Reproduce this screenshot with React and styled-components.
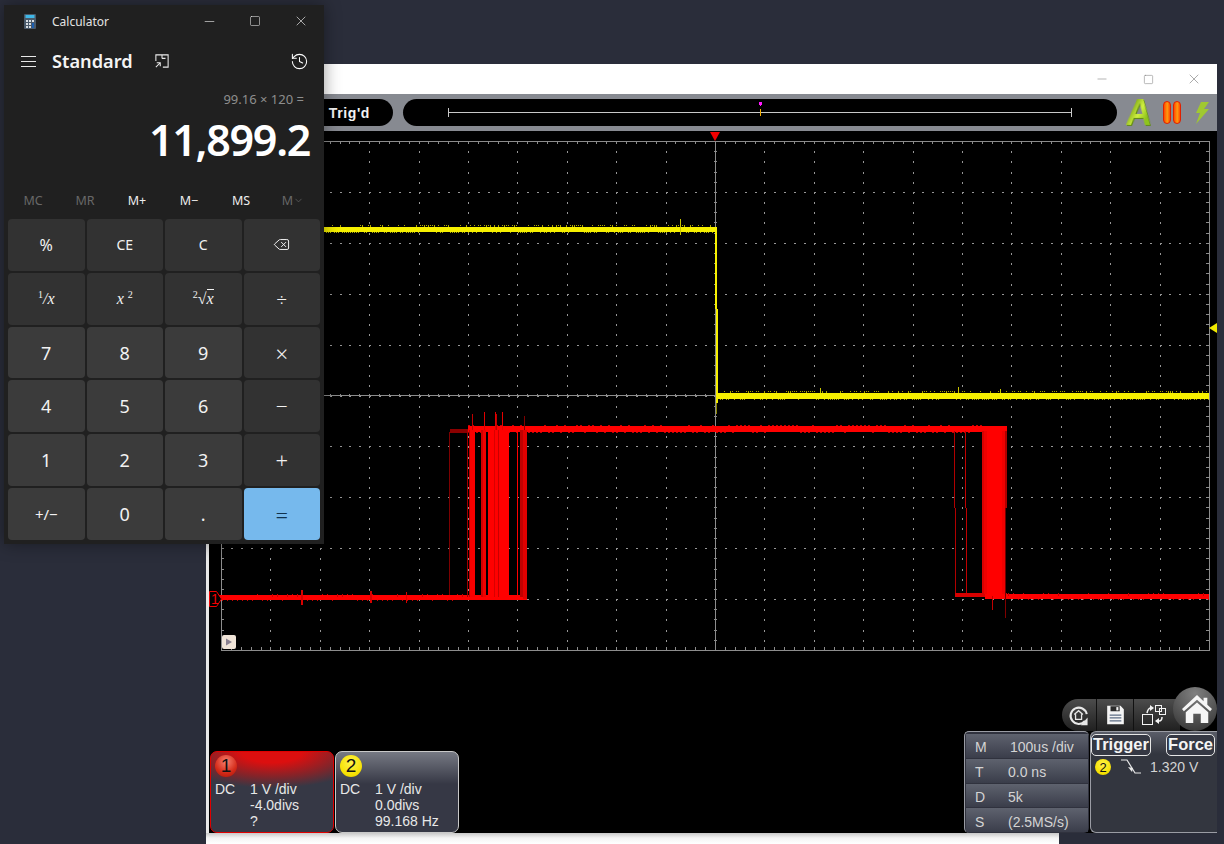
import React from "react";
import styled, { createGlobalStyle } from "styled-components";
import { ChevronDown, Delete, History, Minus, Square, X } from "lucide-react";

const GlobalStyle = createGlobalStyle`
  html, body {
    margin: 0;
    height: 100%;
    overflow: hidden;
    background: #2a2d3a;
  }
  * {
    box-sizing: border-box;
  }
`;

const Desktop = styled.div`
  position: relative;
  width: 1224px;
  height: 844px;
  overflow: hidden;
  background: #2a2d3a;
`;

/* ---------- oscilloscope window ---------- */

const ScopeWindow = styled.section`
  position: absolute;
  left: 206px;
  top: 64px;
  width: 1011px;
  height: 780px;
  display: flex;
  flex-direction: column;
  font-family: "Liberation Sans", Arial, sans-serif;
`;

const ScopeTitleBar = styled.div`
  height: 30px;
  flex: none;
  display: flex;
  justify-content: flex-end;
  align-items: center;
  background: #fff;
`;

const ScopeCtl = styled.span`
  width: 46px;
  display: flex;
  justify-content: center;
  color: #808080;
`;

const Toolbar = styled.div`
  height: 37px;
  flex: none;
  display: flex;
  align-items: center;
  padding: 0 0 0 94px;
  background: #878a91;
`;

const TrigPill = styled.div`
  width: 93px;
  height: 27px;
  display: flex;
  align-items: center;
  justify-content: flex-end;
  padding-right: 23px;
  background: #000;
  border-radius: 0 14px 14px 0;
  color: #f2f2f2;
  font-size: 14px;
  font-weight: 700;
  letter-spacing: 0.6px;
`;

const TimePill = styled.div`
  position: relative;
  width: 714px;
  height: 27px;
  margin-left: 10px;
  background: #000;
  border-radius: 14px;
`;

const TimeLine = styled.span`
  position: absolute;
  left: 45px;
  right: 45px;
  top: 9px;
  height: 9px;
  border-left: 1px solid #c8c8c8;
  border-right: 1px solid #c8c8c8;
  background: linear-gradient(#c8c8c8, #c8c8c8) 0 4px / 100% 1px no-repeat;
`;

const TimeMark = styled.span`
  position: absolute;
  left: 357px;
  top: 3px;
  width: 1px;
  height: 14px;
  background: linear-gradient(#ff19ff 0 4px, transparent 4px 7px, #f6b000 7px);

  &::before {
    content: "";
    position: absolute;
    left: -1px;
    top: 0;
    width: 3px;
    height: 3px;
    background: #ff19ff;
  }
`;

const AutoMark = styled.span`
  width: 26px;
  margin-left: 9px;
  font-size: 36px;
  font-weight: 700;
  line-height: 30px;
  text-align: center;
  background: linear-gradient(115deg, #6f9a10 15%, #d0f040 50%, #8fc41c 75%);
  -webkit-background-clip: text;
  background-clip: text;
  color: transparent;
  transform: skewX(-5deg);
  filter: drop-shadow(1px 1px 0 #5f8a10);
`;

const PauseMark = styled.span`
  display: flex;
  gap: 2px;
  margin-left: 11px;
`;

const PauseBar = styled.span`
  width: 8px;
  height: 23px;
  border-radius: 4px;
  border: 1px solid #e02000;
  background: linear-gradient(90deg, #ff4a00, #ff9a10 55%, #ff4a00);
`;

const BoltMark = styled.svg`
  margin-left: 14px;
  width: 14px;
  height: 22px;
`;

const Screen = styled.div`
  flex: none;
  height: 702px;
  display: flex;
  flex-direction: column;
  justify-content: space-between;
  background: #000;
  border-left: 3px solid #e8e8e8;
`;

const Plot = styled.svg`
  display: block;
  width: 1008px;
  height: 530px;
`;

const Dock = styled.div`
  display: flex;
  justify-content: space-between;
  align-items: flex-end;
  padding-left: 1px;
`;

const Cards = styled.div`
  display: flex;
  gap: 1px;
`;

const Card = styled.div`
  width: 124px;
  height: 82px;
  padding: 3px 4px 0;
  border-radius: 7px;
  border: 1px solid ${(p) => (p.$active ? "#e00000" : "#c8c8c8")};
  background: ${(p) =>
    p.$active
      ? "radial-gradient(ellipse 100px 36px at 50% 0, #dc0f0f 30%, rgba(190,20,20,0.55) 70%, rgba(54,56,69,0) 100%), #363845"
      : "linear-gradient(#767983, #363845 32px)"};
  color: #e8e8e8;
  font-size: 14px;
`;

const Badge = styled.span`
  display: flex;
  align-items: center;
  justify-content: center;
  width: ${(p) => p.$size}px;
  height: ${(p) => p.$size}px;
  flex: none;
  border-radius: 50%;
  color: #111;
  font-size: ${(p) => p.$size - 3}px;
  background: ${(p) =>
    p.$red
      ? "radial-gradient(circle at 50% 30%, #f88070, #d42a18 60%, #a81408)"
      : "radial-gradient(circle at 50% 35%, #fff34a, #f5e000 70%, #c8b400)"};
`;

const CardBody = styled.div`
  display: grid;
  grid-template-columns: 35px 1fr;
  margin-top: 4px;
  line-height: 16px;
`;

const CardValues = styled.div`
  display: flex;
  flex-direction: column;
`;

const Controls = styled.div`
  display: flex;
  flex-direction: column;
  align-items: flex-end;
`;

const ToolRow = styled.div`
  display: flex;
  align-items: flex-end;
`;

const ToolPill = styled.div`
  display: flex;
  height: 32px;
  padding-right: 7px;
  margin-right: -7px;
  border-radius: 16px 0 0 16px;
  background: linear-gradient(#4c4c4c, #202020);
`;

const ToolSeg = styled.span`
  width: ${(p) => p.$w}px;
  display: flex;
  align-items: center;
  justify-content: center;
  border-right: ${(p) => (p.$last ? "none" : "1px solid #111")};
`;

const HomeButton = styled.span`
  position: relative;
  width: 44px;
  height: 44px;
  padding-left: 3px;
  display: flex;
  align-items: center;
  justify-content: center;
  border-radius: 50%;
  background: radial-gradient(circle at 50% 15%, #808080, #484848 70%, #2e2e2e);
`;

const PanelRow = styled.div`
  display: flex;
  gap: 1px;
  height: 102px;
`;

const MeasurePanel = styled.div`
  width: 125px;
  display: flex;
  flex-direction: column;
  gap: 1px;
  padding: 2px 1px 1px 1px;
  border-radius: 5px;
  background: #30323e;
  border: 1px solid #9a9ca4;
  border-width: 1px 0 0 1px;
`;

const MeasureRow = styled.div`
  flex: 1;
  display: grid;
  grid-template-columns: ${(p) => (p.$wide ? "35px" : "33px")} 1fr;
  align-items: center;
  padding: 3px 0 0 9px;
  background: linear-gradient(#5e626e, #3a3d4a);
  color: #d4d4d4;
  font-size: 14px;
`;

const TriggerPanel = styled.div`
  width: 127px;
  padding: 2px 2px 0 0;
  border-radius: 6px 0 0 6px;
  border: 1px solid #9a9ca4;
  border-width: 1px 0 1px 1px;
  background: linear-gradient(#5a5d68, #33363f 22px);
  color: #d4d4d4;
  font-size: 14px;
`;

const TriggerHead = styled.div`
  display: flex;
  justify-content: space-between;
`;

const TriggerButton = styled.span`
  padding: 0 1px;
  height: 22px;
  line-height: 19px;
  border: 1.5px solid #e6e6e6;
  border-radius: 5px;
  font-size: 16.5px;
  font-weight: 700;
  color: #f4f4f4;
  background: #353843;
`;

const TriggerLevel = styled.div`
  display: flex;
  align-items: center;
  margin: 3px 0 0 4px;
`;

const SlopeIcon = styled.svg`
  width: 22px;
  height: 16px;
  margin: 0 8px 0 9px;
`;

const FootStrip = styled.div`
  flex: 1;
  width: 853px;
  background: linear-gradient(#c8c8c8, #f4f4f4 5px, #fff);
`;

/* ---------- calculator window ---------- */

const CalcWindow = styled.section`
  position: absolute;
  left: 4px;
  top: 5px;
  width: 320px;
  height: 539px;
  padding: 0 4px;
  display: flex;
  flex-direction: column;
  background: #202020;
  box-shadow: 0 0 16px rgba(0, 0, 0, 0.4);
  color: #fff;
  font-family: "Noto Sans", "Open Sans", sans-serif;
`;

const CalcTitleBar = styled.div`
  height: 32px;
  flex: none;
  display: flex;
  align-items: center;
  margin-right: -4px;
  padding-left: 16px;
  font-size: 12px;
  color: #e4e4e4;
`;

const CalcTitle = styled.span`
  margin-left: 16px;
  flex: 1;
`;

const CalcCtl = styled.span`
  width: 46px;
  display: flex;
  justify-content: center;
  color: #eee;
`;

const CalcHeader = styled.div`
  height: 48px;
  flex: none;
  display: flex;
  align-items: center;
  padding: 0 11px 0 13px;
`;

const ModeName = styled.h1`
  margin: 0 22px 0 16px;
  font-size: 18.2px;
  font-weight: 600;
  color: #f4f4f4;
`;

const Spread = styled.span`
  flex: 1;
`;

const Expression = styled.div`
  height: 20px;
  margin-top: 4px;
  padding-right: 16px;
  text-align: right;
  font-size: 13px;
  line-height: 20px;
  color: #8e8e8e;
`;

const Display = styled.div`
  height: 60px;
  margin-top: 1px;
  padding-right: 10px;
  text-align: right;
  font-size: 43px;
  font-weight: 600;
  letter-spacing: -1.3px;
  line-height: 60px;
`;

const MemoryRow = styled.div`
  height: 30px;
  margin: 15px 0 0 -1px;
  display: grid;
  grid-template-columns: repeat(6, 52px);
`;

const MemoryKey = styled.span`
  display: flex;
  align-items: center;
  justify-content: center;
  font-size: 12.5px;
  color: ${(p) => (p.$off ? "#686868" : "#ededed")};
`;

const Keypad = styled.div`
  height: 321px;
  margin-top: 4px;
  display: grid;
  grid-template-columns: repeat(4, 1fr);
  grid-template-rows: repeat(6, 1fr);
  gap: 2px;
`;

const toneColor = { fn: "#323232", num: "#3b3b3b", eq: "#76b9ed" };

const Key = styled.div`
  display: flex;
  align-items: center;
  justify-content: center;
  border-radius: 4px;
  background: ${(p) => toneColor[p.$tone]};
  color: ${(p) => (p.$tone === "eq" ? "#10314d" : "#f2f2f2")};
  font-size: ${(p) => p.$size || 18}px;
  font-weight: ${(p) => (p.$light ? 300 : 400)};
`;

const MathText = styled.span`
  font-family: "Liberation Serif", "Times New Roman", serif;
  font-style: italic;
  font-size: 16px;

  sup {
    font-style: normal;
    font-size: 10px;
    line-height: 0;
  }
`;

const Radicand = styled.span`
  border-top: 1px solid #f2f2f2;
`;

/* ---------- plot data, in page coordinates ---------- */

const left = 221;
const right = 1209;
const top = 141;
const bottom = 650;
const divX = (right - left) / 20;
const divY = (bottom - top) / 10;
const midX = 715;
const midY = 395;

const grid = (() => {
  let dots = "";
  for (let i = 1; i < 20; i++) {
    const x = Math.round(left + i * divX);
    for (let j = 1; j < 50; j++) {
      dots += `M${x} ${Math.round(top + (j * divY) / 5)}h1v2h-1z`;
    }
  }
  for (let i = 1; i < 10; i++) {
    const y = Math.round(top + i * divY);
    for (let j = 1; j < 100; j++) {
      dots += `M${Math.round(left + (j * divX) / 5)} ${y}h2v1h-2z`;
    }
  }
  return dots;
})();

const ticks = (() => {
  let t = "";
  for (let j = 1; j < 100; j++) {
    const x = Math.round(left + (j * divX) / 5);
    t += `M${x} ${top}v3M${x} ${bottom}v-3M${x} ${midY - 1}v3`;
  }
  for (let j = 1; j < 50; j++) {
    const y = Math.round(top + (j * divY) / 5);
    t += `M${left} ${y}h3M${right} ${y}h-3M${midX - 1} ${y}h3`;
  }
  return t;
})();

// small repeatable noise along a trace
const noise = (from, to, step, seed) => {
  const out = [];
  for (let x = from; x < to; x += step) {
    const r = Math.abs(Math.sin(x * 12.9898 + seed) * 43758.5453) % 1;
    out.push({ x, r });
  }
  return out;
};

const yellowSpikes = noise(326, 714, 2, 1);
const yellowLowSpikes = noise(720, 1209, 2, 2);
const redLowSpikes = noise(222, 470, 5, 3);
const redHighSpikes = noise(468, 982, 4, 4);
const redTailSpikes = noise(1008, 1209, 5, 5);

const burstA = [
  [449, 1, 432, 595, "#7d0000"],
  [467, 1, 430, 597, "#a00000"],
  [469, 1, 430, 597, "#c00000"],
  [470, 5, 430, 597, "#f80000"],
  [481, 2, 430, 597, "#d00000"],
  [483, 3, 430, 597, "#f00000"],
  [488, 21, 430, 597, "#ff0000"],
  [494, 1, 430, 597, "#d80000"],
  [498, 1, 430, 597, "#c80000"],
  [517, 1, 430, 597, "#ff0000"],
  [520, 3, 430, 597, "#c00000"],
  [523, 4, 430, 599, "#e00000"],
  [472, 1, 414, 430, "#c00000"],
  [484, 1, 412, 430, "#e00000"],
  [495, 1, 412, 430, "#e00000"],
  [496, 1, 414, 430, "#c00000"],
  [502, 1, 412, 430, "#e80000"],
  [524, 1, 416, 430, "#800000"],
];

const burstB = [
  [954, 1, 431, 508, "#b00000"],
  [955, 1, 508, 593, "#b00000"],
  [965, 1, 431, 508, "#c00000"],
  [966, 1, 508, 593, "#c00000"],
  [982, 2, 431, 594, "#d80000"],
  [984, 3, 431, 594, "#f00000"],
  [987, 15, 431, 596, "#ff0000"],
  [1002, 3, 431, 594, "#f00000"],
  [1005, 2, 431, 508, "#b00000"],
  [1005, 1, 508, 598, "#700000"],
  [992, 1, 596, 610, "#c00000"],
  [1005, 1, 596, 618, "#800000"],
];

const Waveforms = () => (
  <g shapeRendering="crispEdges">
    {/* yellow channel */}
    <rect x="209" y="227" width="507" height="5" fill="#f6f000" />
    {yellowSpikes.map((s) => (
      <rect
        key={s.x}
        x={s.x}
        y={s.r > 0.5 ? 225 : 232}
        width="1"
        height={s.r > 0.8 ? 2 : 1}
        fill="#b0ac00"
      />
    ))}
    <rect x="680" y="219" width="1" height="16" fill="#c8c400" />
    <rect x="715" y="227" width="2" height="82" fill="#f6f000" />
    <rect x="716" y="309" width="2" height="94" fill="#f6f000" />
    <rect x="716" y="403" width="1" height="11" fill="#8a8600" />
    <rect x="718" y="393" width="491" height="6" fill="#f6f000" />
    {yellowLowSpikes.map((s) => (
      <rect key={s.x} x={s.x} y={s.r > 0.5 ? 391 : 399} width="1" height={s.r > 0.85 ? 2 : 1} fill="#a8a400" />
    ))}
    <rect x="820" y="388" width="1" height="5" fill="#c8c400" />
    <rect x="958" y="387" width="1" height="6" fill="#c8c400" />
    <rect x="1000" y="389" width="1" height="4" fill="#c8c400" />

    {/* red channel */}
    <rect x="450" y="429" width="20" height="4" fill="#8b0000" />
    <rect x="468" y="426" width="539" height="6" fill="#ff0000" />
    {redHighSpikes.map((s) => (
      <rect key={s.x} x={s.x} y={s.r > 0.5 ? 425 : 432} width="2" height="1" fill="#c00000" />
    ))}
    <rect x="209" y="595" width="318" height="5" fill="#ff0000" />
    <rect x="955" y="593" width="52" height="4" fill="#d80000" />
    <rect x="985" y="594" width="224" height="5" fill="#ff0000" />
    {redLowSpikes.map((s) => (
      <rect key={s.x} x={s.x} y={s.r > 0.5 ? 594 : 600} width="1" height={s.r > 0.8 ? 3 : 1} fill="#c80000" />
    ))}
    <rect x="301" y="590" width="2" height="15" fill="#d80000" />
    <rect x="370" y="591" width="2" height="12" fill="#d80000" />
    <rect x="406" y="592" width="1" height="11" fill="#d80000" />
    {redTailSpikes.map((s) => (
      <rect key={s.x} x={s.x} y={s.r > 0.5 ? 593 : 599} width="1" height={s.r > 0.85 ? 3 : 1} fill="#c00000" />
    ))}
    {[...burstA, ...burstB].map(([x, w, y1, y2, c]) => (
      <rect key={`${x}-${y1}-${c}`} x={x} y={y1} width={w} height={y2 - y1} fill={c} />
    ))}
  </g>
);

const ScopePlot = () => (
  <Plot viewBox="209 131 1008 530">
    <path d={grid} fill="#969696" shapeRendering="crispEdges" />
    <g stroke="#8c8c8c" fill="none" shapeRendering="crispEdges">
      <rect x={left} y={top} width={right - left} height={bottom - top} />
      <path d={`M${left} ${midY}H${right}M${midX} ${top}V${bottom}`} />
      <path d={ticks} />
    </g>
    <Waveforms />
    <path d="M710 132h10l-5 9z" fill="#f00000" />
    <path d="M1217 323v10l-8 -5z" fill="#f0e800" />
    <path d="M209.500 591.500h7l5 7.500l-5 7.500h-7z" fill="#000" stroke="#f00000" />
    <text x="211" y="604" fill="#f00000" fontSize="14" fontFamily="Liberation Sans">1</text>
    <rect x="222" y="635" width="14" height="14" rx="2" fill="#f0e4d8" />
    <path d="M226 638.500l6 3.500l-6 3.500z" fill="#8a8090" />
  </Plot>
);

const ReplayIcon = () => (
  <svg width="24" height="24" viewBox="0 0 28 28" fill="none">
    <path d="M21 21a9.500 9.500 0 1 1 2-8" stroke="#e8e8e8" strokeWidth="2.400" />
    <path d="M24 17v9h-8z" fill="#e8e8e8" />
    <path d="M8.500 13.500l5-4.500l5 4.500M10 13v6h7v-6" stroke="#e8e8e8" strokeWidth="1.500" />
  </svg>
);

const SaveIcon = () => (
  <svg width="19" height="20" viewBox="0 0 22 24">
    <path d="M1 1h16l4 4v18H1z" fill="#f4f4f4" />
    <rect x="5" y="1.500" width="11" height="6" fill="#2a2a2a" />
    <rect x="12" y="2.500" width="2.500" height="4" fill="#f4f4f4" />
    <path d="M4 12h14M4 15.500h14M4 19h14" stroke="#5c6c84" strokeWidth="1.500" />
  </svg>
);

const SwapIcon = () => (
  <svg width="24" height="20" viewBox="0 0 24 20" fill="none">
    <rect x="0.500" y="9.500" width="10" height="10" stroke="#f4f4f4" />
    <rect x="13.500" y="0.500" width="6" height="6" stroke="#f4f4f4" />
    <rect x="17.500" y="3.500" width="6" height="6" stroke="#f4f4f4" />
    <path d="M5 8q1-5 4-5" stroke="#f4f4f4" strokeWidth="1.500" />
    <path d="M8 0l4 3l-4 3z" fill="#f4f4f4" />
    <path d="M20 12q0 4-3 4" stroke="#f4f4f4" strokeWidth="1.500" />
    <path d="M17 13l-4 3l4 3z" fill="#f4f4f4" />
  </svg>
);

const HouseIcon = () => (
  <svg width="32" height="30" viewBox="0 0 34 32">
    <path d="M17 1L1 16l2 2.500L17 6l14 12.500 2-2.500-5-4.600V4h-4v3.700z" fill="#f6f6f6" />
    <path d="M5 19.500L17 9l12 10.500V31h-8V21h-8v10H5z" fill="#f6f6f6" />
  </svg>
);

const CalcGlyph = () => (
  <svg width="12" height="15" viewBox="0 0 12 15">
    <rect width="12" height="15" rx="1" fill="#4a5a6a" />
    <rect x="1.500" y="1" width="9" height="3" fill="#3fb8e8" />
    <path d="M2 6h2v2H2zM5 6h2v2H5zM2 9h2v2H2zM5 9h2v2H5zM2 12h2v2H2zM5 12h2v2H5z" fill="#d8dde2" />
    <rect x="8" y="9" width="2" height="5" fill="#1d5fb0" />
    <rect x="8" y="6" width="2" height="2" fill="#d8dde2" />
  </svg>
);

const MenuGlyph = () => (
  <svg width="15" height="11" viewBox="0 0 15 11" stroke="#e8e8e8" strokeWidth="1.100">
    <path d="M0 0.500h15M0 5.500h15M0 10.500h15" />
  </svg>
);

const CompactGlyph = () => (
  <svg width="14" height="14" viewBox="0 0 16 16" fill="none" stroke="#ececec" strokeWidth="1.200">
    <path d="M1 8V1h7v4M8 1h7v14H9M8 5h4" />
    <path d="M1 15l5-5M2 10h4v4" />
  </svg>
);

const keys = [
  { tone: "fn", label: "%", size: 16 },
  { tone: "fn", label: "CE", size: 14 },
  { tone: "fn", label: "C", size: 14 },
  { tone: "fn", label: <Delete size={17} strokeWidth={1.4} /> },
  { tone: "fn", label: <MathText><sup>1</sup>/x</MathText> },
  { tone: "fn", label: <MathText>x <sup>2</sup></MathText> },
  { tone: "fn", label: <MathText><sup>2</sup>√<Radicand>x</Radicand></MathText> },
  { tone: "fn", label: "÷", size: 19, light: true },
  { tone: "num", label: "7" },
  { tone: "num", label: "8" },
  { tone: "num", label: "9" },
  { tone: "fn", label: "×", size: 22, light: true },
  { tone: "num", label: "4" },
  { tone: "num", label: "5" },
  { tone: "num", label: "6" },
  { tone: "fn", label: "−", size: 21, light: true },
  { tone: "num", label: "1" },
  { tone: "num", label: "2" },
  { tone: "num", label: "3" },
  { tone: "fn", label: "+", size: 22, light: true },
  { tone: "num", label: "+/−", size: 15 },
  { tone: "num", label: "0" },
  { tone: "num", label: "." },
  { tone: "eq", label: "=", size: 22, light: true },
];

const memory = [
  { label: "MC", off: true },
  { label: "MR", off: true },
  { label: "M+" },
  { label: "M−" },
  { label: "MS" },
  { label: <>M<ChevronDown size={11} strokeWidth={1.5} /></>, off: true },
];

const Calculator = () => (
  <CalcWindow>
    <CalcTitleBar>
      <CalcGlyph />
      <CalcTitle>Calculator</CalcTitle>
      <CalcCtl><Minus size={15} strokeWidth={1} /></CalcCtl>
      <CalcCtl><Square size={12} strokeWidth={1.1} /></CalcCtl>
      <CalcCtl><X size={16} strokeWidth={1} /></CalcCtl>
    </CalcTitleBar>
    <CalcHeader>
      <MenuGlyph />
      <ModeName>Standard</ModeName>
      <CompactGlyph />
      <Spread />
      <History size={19} strokeWidth={1.3} />
    </CalcHeader>
    <Expression>99.16 × 120 =</Expression>
    <Display>11,899.2</Display>
    <MemoryRow>
      {memory.map((m, i) => (
        <MemoryKey key={i} $off={m.off}>{m.label}</MemoryKey>
      ))}
    </MemoryRow>
    <Keypad>
      {keys.map((k, i) => (
        <Key key={i} $tone={k.tone} $size={k.size} $light={k.light}>{k.label}</Key>
      ))}
    </Keypad>
  </CalcWindow>
);

const Scope = () => (
  <ScopeWindow>
    <ScopeTitleBar>
      <ScopeCtl><Minus size={14} strokeWidth={1} /></ScopeCtl>
      <ScopeCtl><Square size={11} strokeWidth={1.2} /></ScopeCtl>
      <ScopeCtl><X size={16} strokeWidth={1} /></ScopeCtl>
    </ScopeTitleBar>
    <Toolbar>
      <TrigPill>Trig'd</TrigPill>
      <TimePill>
        <TimeLine />
        <TimeMark />
      </TimePill>
      <AutoMark>A</AutoMark>
      <PauseMark>
        <PauseBar />
        <PauseBar />
      </PauseMark>
      <BoltMark viewBox="0 0 14 22">
        <path d="M6 0h8L9 7h5L1 22l4-11H1z" fill="#a0c830" />
      </BoltMark>
    </Toolbar>
    <Screen>
      <ScopePlot />
      <Dock>
        <Cards>
          <Card $active>
            <Badge $red $size={22}>1</Badge>
            <CardBody>
              <span>DC</span>
              <CardValues>
                <span>1 V /div</span>
                <span>-4.0divs</span>
                <span>?</span>
              </CardValues>
            </CardBody>
          </Card>
          <Card>
            <Badge $size={22}>2</Badge>
            <CardBody>
              <span>DC</span>
              <CardValues>
                <span>1 V /div</span>
                <span>0.0divs</span>
                <span>99.168 Hz</span>
              </CardValues>
            </CardBody>
          </Card>
        </Cards>
        <Controls>
          <ToolRow>
            <ToolPill>
              <ToolSeg $w={35}><ReplayIcon /></ToolSeg>
              <ToolSeg $w={37}><SaveIcon /></ToolSeg>
              <ToolSeg $w={39} $last><SwapIcon /></ToolSeg>
            </ToolPill>
            <HomeButton><HouseIcon /></HomeButton>
          </ToolRow>
          <PanelRow>
            <MeasurePanel>
              <MeasureRow $wide>
                <span>M</span>
                <span>100us /div</span>
              </MeasureRow>
              <MeasureRow>
                <span>T</span>
                <span>0.0 ns</span>
              </MeasureRow>
              <MeasureRow>
                <span>D</span>
                <span>5k</span>
              </MeasureRow>
              <MeasureRow>
                <span>S</span>
                <span>(2.5MS/s)</span>
              </MeasureRow>
            </MeasurePanel>
            <TriggerPanel>
              <TriggerHead>
                <TriggerButton>Trigger</TriggerButton>
                <TriggerButton>Force</TriggerButton>
              </TriggerHead>
              <TriggerLevel>
                <Badge $size={16}>2</Badge>
                <SlopeIcon viewBox="0 0 22 16" fill="none">
                  <path d="M1 1h6l8 13h6" stroke="#e8e8e8" strokeWidth="1.200" />
                  <path d="M8 8l5 1-1 4z" fill="#e8e8e8" />
                </SlopeIcon>
                <span>1.320 V</span>
              </TriggerLevel>
            </TriggerPanel>
          </PanelRow>
        </Controls>
      </Dock>
    </Screen>
    <FootStrip />
  </ScopeWindow>
);

const App = () => (
  <Desktop>
    <GlobalStyle />
    <Scope />
    <Calculator />
  </Desktop>
);

export default App;
